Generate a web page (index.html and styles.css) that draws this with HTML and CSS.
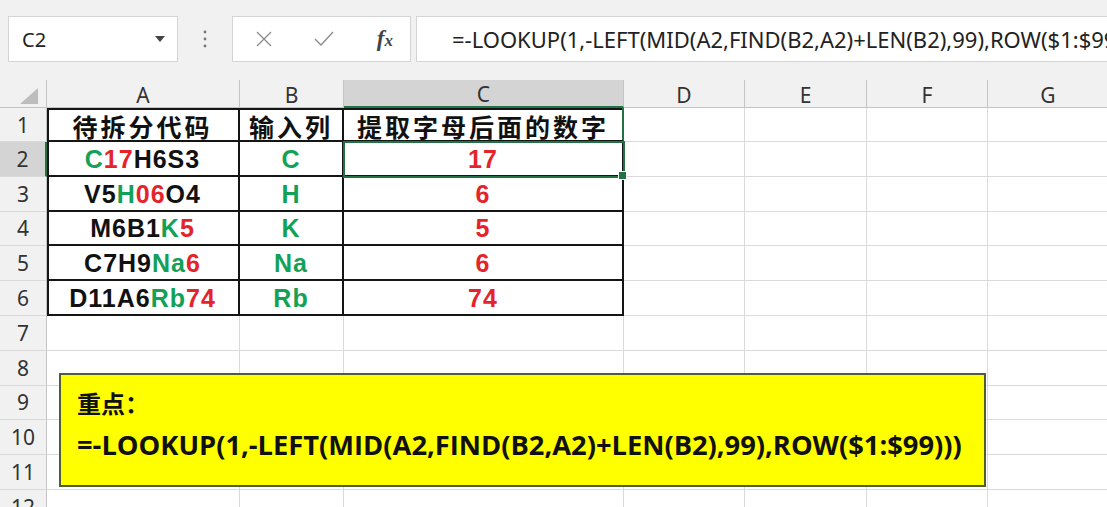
FILE: index.html
```html
<!DOCTYPE html>
<html lang="zh-CN">
<head>
    <meta charset="UTF-8">
    <title>LOOKUP 提取字母后面的数字</title>
    <link rel="stylesheet" href="styles.css">
</head>
<body>

    <div class="toolbar">
        <div class="namebox">
            <span>C2</span>
            <svg width="10" height="6" viewBox="0 0 10 6"><path d="M0 0 L10 0 L5 6 Z" fill="#444"/></svg>
        </div>
        <div class="dots">
            <svg width="4" height="18" viewBox="0 0 4 18"><circle cx="2" cy="2" r="1.4" fill="#777"/><circle cx="2" cy="9" r="1.4" fill="#777"/><circle cx="2" cy="16" r="1.4" fill="#777"/></svg>
        </div>
        <div class="fxgroup">
            <svg width="16" height="16" viewBox="0 0 16 16"><path d="M1 1 L15 15 M15 1 L1 15" stroke="#8a8a8a" stroke-width="1.3" fill="none"/></svg>
            <svg width="20" height="16" viewBox="0 0 20 16"><path d="M1 8 L7 14 L19 1" stroke="#8a8a8a" stroke-width="1.3" fill="none"/></svg>
            <span class="fx">f<span>x</span></span>
        </div>
        <div class="formula">=-LOOKUP(1,-LEFT(MID(A2,FIND(B2,A2)+LEN(B2),99),ROW($1:$99)))</div>
    </div>

    <div class="sheet">
        <div class="grid">
            <!-- header row -->
            <div class="corner"><svg width="18" height="16" viewBox="0 0 18 16"><path d="M18 0 L18 16 L0 16 Z" fill="#bdbdbd"/></svg></div>
            <div class="colhead">A</div>
            <div class="colhead">B</div>
            <div class="colhead sel">C</div>
            <div class="colhead">D</div>
            <div class="colhead">E</div>
            <div class="colhead">F</div>
            <div class="colhead">G</div>

            <!-- 1 -->
            <div class="rowhead">1</div>
            <div class="cell t ta ttop cn">待拆分代码</div>
            <div class="cell t ttop cn">输入列</div>
            <div class="cell t ttop cn c1">提取字母后面的数字</div>
            <div class="cell"></div><div class="cell"></div><div class="cell"></div><div class="cell"></div>

            <!-- 2 -->
            <div class="rowhead sel">2</div>
            <div class="cell t ta"><span class="g">C</span><span class="r">17</span>H6S3</div>
            <div class="cell t g">C</div>
            <div class="cell t r active">17</div>
            <div class="cell"></div><div class="cell"></div><div class="cell"></div><div class="cell"></div>

            <!-- 3 -->
            <div class="rowhead">3</div>
            <div class="cell t ta">V5<span class="g">H</span><span class="r">06</span>O4</div>
            <div class="cell t g">H</div>
            <div class="cell t r">6</div>
            <div class="cell"></div><div class="cell"></div><div class="cell"></div><div class="cell"></div>

            <!-- 4 -->
            <div class="rowhead">4</div>
            <div class="cell t ta">M6B1<span class="g">K</span><span class="r">5</span></div>
            <div class="cell t g">K</div>
            <div class="cell t r">5</div>
            <div class="cell"></div><div class="cell"></div><div class="cell"></div><div class="cell"></div>

            <!-- 5 -->
            <div class="rowhead">5</div>
            <div class="cell t ta">C7H9<span class="g">Na</span><span class="r">6</span></div>
            <div class="cell t g">Na</div>
            <div class="cell t r">6</div>
            <div class="cell"></div><div class="cell"></div><div class="cell"></div><div class="cell"></div>

            <!-- 6 -->
            <div class="rowhead">6</div>
            <div class="cell t ta">D11A6<span class="g">Rb</span><span class="r">74</span></div>
            <div class="cell t g">Rb</div>
            <div class="cell t r">74</div>
            <div class="cell"></div><div class="cell"></div><div class="cell"></div><div class="cell"></div>

            <div class="rowhead">7</div>
            <div class="cell"></div><div class="cell"></div><div class="cell"></div><div class="cell"></div><div class="cell"></div><div class="cell"></div><div class="cell"></div>
            <div class="rowhead">8</div>
            <div class="cell"></div><div class="cell"></div><div class="cell"></div><div class="cell"></div><div class="cell"></div><div class="cell"></div><div class="cell"></div>
            <div class="rowhead">9</div>
            <div class="cell"></div><div class="cell"></div><div class="cell"></div><div class="cell"></div><div class="cell"></div><div class="cell"></div><div class="cell"></div>
            <div class="rowhead">10</div>
            <div class="cell"></div><div class="cell"></div><div class="cell"></div><div class="cell"></div><div class="cell"></div><div class="cell"></div><div class="cell"></div>
            <div class="rowhead">11</div>
            <div class="cell"></div><div class="cell"></div><div class="cell"></div><div class="cell"></div><div class="cell"></div><div class="cell"></div><div class="cell"></div>
            <div class="rowhead">12</div>
            <div class="cell"></div><div class="cell"></div><div class="cell"></div><div class="cell"></div><div class="cell"></div><div class="cell"></div><div class="cell"></div>
        </div>

        <!-- текстовое поле поверх листа -->
        <div class="note">
            <div class="note-title">重点：</div>
            <div class="note-formula">=-LOOKUP(1,-LEFT(MID(A2,FIND(B2,A2)+LEN(B2),99),ROW($1:$99)))</div>
        </div>
    </div>

</body>
</html>
```

FILE: styles.css
```css
body {
    margin: 0;
    background: #fff;
    font-family: "Liberation Sans", Arial, sans-serif;
    overflow: hidden;
}
.toolbar {
    height: 80px;
    box-sizing: border-box;
    background: #f1f1f1;
    display: flex;
    align-items: flex-start;
    padding: 16px 0 0 8px;
}
.namebox, .fxgroup, .formula {
    height: 46px;
    box-sizing: border-box;
    background: #fff;
    border: 1px solid #d4d4d4;
    display: flex;
    align-items: center;
}
.namebox {
    width: 170px;
    justify-content: space-between;
    padding: 0 12px 0 13px;
    font-family: "Noto Sans", sans-serif;
    font-size: 20px;
    color: #222;
}
.dots {
    width: 54px;
    height: 46px;
    display: flex;
    align-items: center;
    justify-content: center;
}
.fxgroup {
    width: 179px;
    justify-content: space-between;
    padding: 0 17px 0 23px;
}
.fx {
    font-family: "Liberation Serif", serif;
    font-style: italic;
    font-weight: bold;
    font-size: 23px;
    color: #444;
}
.fx span {
    font-size: 17px;
}
.formula {
    flex: 1;
    margin-left: 5px;
    border-right: none;
    padding-left: 35px;
    font-family: "Noto Sans", sans-serif;
    font-size: 22px;
    color: #222;
    white-space: nowrap;
    overflow: hidden;
}
.sheet {
    position: relative;
}
.grid {
    display: grid;
    grid-template-columns: 47px 193px 104px 280px 121px 122px 121px 121px;
    grid-template-rows: 28px 34px repeat(11, 34.8px);
}
.grid > div {
    box-sizing: border-box;
    display: flex;
    align-items: center;
    justify-content: center;
}
.corner {
    background: #f1f1f1;
    border-right: 1px solid #c4c4c4;
    border-bottom: 1px solid #c4c4c4;
    padding: 4px 0 0 12px;
}
.colhead {
    background: #f1f1f1;
    border-right: 1px solid #c4c4c4;
    border-bottom: 1px solid #c4c4c4;
    font-family: "Noto Sans", sans-serif;
    font-size: 21px;
    color: #333;
    padding-top: 2px;
}
.colhead.sel {
    background: #d4d4d4;
    border-bottom: 2px solid #217346;
}
.rowhead {
    background: #f1f1f1;
    border-right: 1px solid #c4c4c4;
    border-bottom: 1px solid #d8d8d8;
    font-family: "Noto Sans", sans-serif;
    font-size: 21px;
    color: #333;
}
.rowhead.sel {
    background: #d4d4d4;
    border-right: 2px solid #217346;
}
.cell {
    border-right: 1px solid #dadada;
    border-bottom: 1px solid #dadada;
    font-weight: bold;
    font-size: 25px;
    letter-spacing: 1px;
    color: #111;
    padding-top: 2px;
}
.cell.t {
    border-right: 2px solid #151515;
    border-bottom: 2px solid #151515;
}
.cell.ta {
    box-shadow: inset 2px 0 0 #151515;
}
.cell.ttop {
    box-shadow: inset 0 2px 0 #151515;
}
.cell.ta.ttop {
    box-shadow: inset 2px 2px 0 #151515;
}
.cell.cn {
    font-family: "Noto Sans CJK SC", sans-serif;
    font-size: 25px;
    letter-spacing: 3px;
    align-items: flex-end;
    line-height: 1;
    padding: 0 0 1px;
}
.cell.c1 {
    border-right-color: #217346;
}
.g {
    color: #13a158;
}
.r {
    color: #e5232b;
}
.active {
    position: relative;
    outline: 2px solid #217346;
    outline-offset: -1px;
}
.active::after {
    content: "";
    position: absolute;
    right: -5px;
    bottom: -5px;
    width: 7px;
    height: 7px;
    background: #217346;
    border: 1px solid #fff;
}
.note {
    position: absolute;
    left: 59px;
    top: 293px;
    width: 927px;
    height: 114px;
    box-sizing: border-box;
    background: #ffff00;
    border: 2px solid #4f5d38;
    padding: 12px 0 0 16px;
    color: #111;
}
.note-title {
    font-family: "Noto Sans CJK SC", sans-serif;
    font-weight: bold;
    font-size: 24px;
    line-height: 32px;
}
.note-formula {
    font-family: "Open Sans", sans-serif;
    font-weight: bold;
    font-size: 27.3px;
    line-height: 36px;
    margin-top: 8px;
}
```
